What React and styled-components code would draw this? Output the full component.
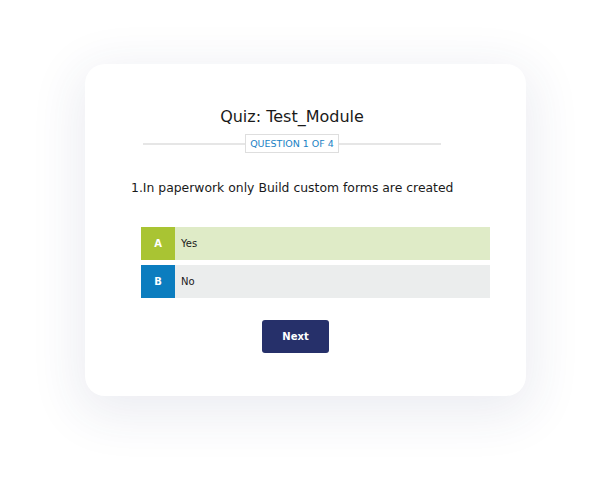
import React from "react";
import styled, { createGlobalStyle } from "styled-components";

const GlobalStyle = createGlobalStyle`
  html, body {
    margin: 0;
    padding: 0;
    background: #ffffff;
    font-family: "DejaVu Sans", Verdana, sans-serif;
  }
`;

const Page = styled.div`
  width: 611px;
  height: 503px;
  padding: 64px 0 0 85px;
  box-sizing: border-box;
`;

const Card = styled.div`
  width: 441px;
  height: 332px;
  box-sizing: border-box;
  background: #ffffff;
  border-radius: 20px;
  box-shadow: 0 12px 50px 8px rgba(40, 50, 110, 0.09);
  display: flex;
  flex-direction: column;
  align-items: flex-start;
  padding-top: 43px;
`;

const Heading = styled.div`
  margin-left: 58px;
  width: 298px;
  display: flex;
  flex-direction: column;
  align-items: center;
`;

const Title = styled.h1`
  margin: 0;
  font-size: 16px;
  font-weight: normal;
  color: #1a1a1a;
  line-height: 20px;
`;

const Divider = styled.div`
  margin-top: 7px;
  width: 100%;
  display: flex;
  align-items: center;
  &::before,
  &::after {
    content: "";
    flex: 1;
    height: 2px;
    background: #e6e6e6;
  }
`;

const Badge = styled.span`
  border: 1px solid #dedede;
  color: #1a82c4;
  font-size: 9.5px;
  line-height: 17px;
  padding: 0 4px;
  white-space: nowrap;
`;

const Question = styled.p`
  margin: 26px 0 0 46px;
  font-size: 12.4px;
  line-height: 18px;
  color: #1a1a1a;
`;

const Options = styled.div`
  margin: 30px 0 0 56px;
  width: 349px;
  display: flex;
  flex-direction: column;
  gap: 5px;
`;

const Option = styled.div`
  display: flex;
  height: 33px;
  background: ${(p) => p.$bg};
  font-size: 10px;
  color: #1a1a1a;
`;

const Letter = styled.div`
  width: 34px;
  flex: none;
  display: flex;
  align-items: center;
  justify-content: center;
  background: ${(p) => p.$color};
  color: #ffffff;
  font-weight: bold;
`;

const Label = styled.div`
  display: flex;
  align-items: center;
  padding-left: 6px;
`;

const NextButton = styled.button`
  margin: 22px 0 0 177px;
  width: 67px;
  height: 33px;
  border: none;
  border-radius: 3px;
  background: #26306a;
  color: #ffffff;
  font-family: "DejaVu Sans", Verdana, sans-serif;
  font-size: 10px;
  font-weight: bold;
  cursor: pointer;
`;

const options = [
  { letter: "A", text: "Yes", color: "#a9c433", bg: "#dfebc7" },
  { letter: "B", text: "No", color: "#0b7dbf", bg: "#ebeded" },
];

export default function App() {
  return (
    <>
      <GlobalStyle />
      <Page>
        <Card>
          <Heading>
            <Title>Quiz: Test_Module</Title>
            <Divider>
              <Badge>QUESTION 1 OF 4</Badge>
            </Divider>
          </Heading>
          <Question>1.In paperwork only Build custom forms are created</Question>
          <Options>
            {options.map((o) => (
              <Option key={o.letter} $bg={o.bg}>
                <Letter $color={o.color}>{o.letter}</Letter>
                <Label>{o.text}</Label>
              </Option>
            ))}
          </Options>
          <NextButton>Next</NextButton>
        </Card>
      </Page>
    </>
  );
}
